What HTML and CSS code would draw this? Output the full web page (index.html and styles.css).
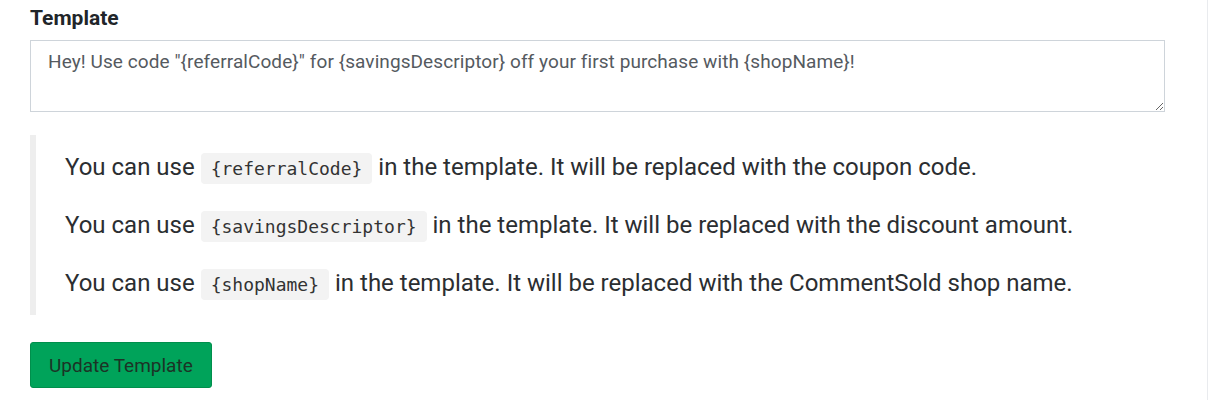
FILE: index.html
```html
<!DOCTYPE html>
<html>
<head>
<meta charset="utf-8">
<link rel="stylesheet" href="styles.css">
</head>
<body>
<div class="page">
  <form class="form">
    <label class="label" for="tpl">Template</label>
    <textarea id="tpl" class="input">Hey! Use code "{referralCode}" for {savingsDescriptor} off your first purchase with {shopName}!</textarea>
    <blockquote class="notes">
      <p>You can use <code>{referralCode}</code> in the template. It will be replaced with the coupon code.</p>
      <p>You can use <code>{savingsDescriptor}</code> in the template. It will be replaced with the discount amount.</p>
      <p>You can use <code>{shopName}</code> in the template. It will be replaced with the CommentSold shop name.</p>
    </blockquote>
    <button type="button" class="btn">Update Template</button>
  </form>
</div>
</body>
</html>
```
FILE: styles.css
```css
html, body { margin: 0; padding: 0; background: #fff; }
body { font-family: Roboto, "Liberation Sans", sans-serif; color: #212529; }
.page {
  width: 1208px;
  height: 400px;
  box-sizing: border-box;
  border-right: 1px solid #e9ebee;
  padding: 7px 42px 0 30px;
}
.form { display: flex; flex-direction: column; align-items: flex-start; }
.label {
  font-size: 21px;
  font-weight: 700;
  line-height: 22px;
  margin-bottom: 11px;
  color: #212529;
}
.input {
  box-sizing: border-box;
  width: 1135px;
  height: 72px;
  border: 1px solid #ced4da;
  border-radius: 0;
  padding: 9px 17px;
  font-family: Roboto, "Liberation Sans", sans-serif;
  font-size: 19px;
  line-height: 24px;
  letter-spacing: 0.08px;
  color: #555a5f;
  resize: vertical;
  margin: 0;
}
.notes {
  margin: 23px 0 0 0;
  border-left: 6px solid #eeeeee;
  padding: 13px 0 13px 29px;
  width: 1100px;
}
.notes p {
  margin: 0 0 20px 0;
  font-size: 24px;
  line-height: 38px;
  color: #2b2e31;
}
.notes p:last-child { margin-bottom: 0; }
code {
  font-family: "DejaVu Sans Mono", monospace;
  font-size: 18px;
  line-height: 20px;
  background: #f3f3f3;
  border-radius: 4px;
  padding: 5px 10px;
  color: #333;
}
.btn {
  margin-top: 27px;
  height: 46px;
  padding: 0 18px;
  background: #00a35a;
  border: 1px solid #008f4c;
  border-radius: 3px;
  font-family: Roboto, "Liberation Sans", sans-serif;
  font-size: 19px;
  color: #1c3326;
}
```
